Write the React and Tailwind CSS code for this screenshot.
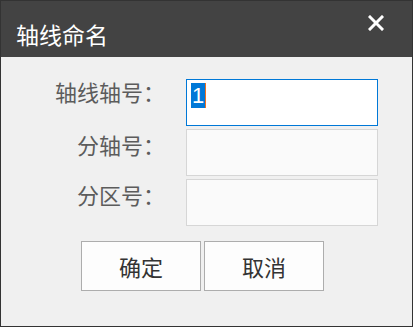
import React from "react";

const cjk = { fontFamily: '"Noto Sans CJK SC", "Noto Sans", sans-serif' };

const App = () => {
    return (
        <div className="w-[413px] h-[327px] bg-[#f0f0f0] border border-[#333333] flex flex-col" style={cjk}>
            {/* Title bar */}
            <div className="h-[56px] bg-[#434343] flex items-center justify-between pl-[15px] pr-[28px] shrink-0">
                <span className="text-white text-[23px] leading-none mt-[10px]">轴线命名</span>
                <svg width="16" height="16" viewBox="0 0 16 16" className="-mt-[13px]">
                    <path d="M2 2 L14 14 M14 2 L2 14" stroke="#ffffff" strokeWidth="3" strokeLinecap="square" />
                </svg>
            </div>

            {/* Form */}
            <div className="pt-[22px] flex flex-col gap-[3px]">
                <div className="flex">
                    <div className="w-[164px] text-right text-[22px] leading-none text-[#5c5c5c] pt-[1px]">轴线轴号：</div>
                    <div className="ml-[21px] w-[192px] h-[47px] bg-white border border-[#0078d7] px-[4px] pt-[3px]">
                        <span className="inline-flex items-center h-[25px] text-[22px] leading-none" style={{ fontFamily: '"Liberation Sans", sans-serif' }}>
                            <span className="bg-[#0078d7] text-white px-[1px] h-[25px] flex items-center">1</span>
                            <span className="w-[1px] h-[25px] bg-[#f07020]" />
                        </span>
                    </div>
                </div>
                <div className="flex">
                    <div className="w-[164px] text-right text-[22px] leading-none text-[#5c5c5c] pt-[4px]">分轴号：</div>
                    <div className="ml-[21px] w-[192px] h-[47px] bg-[#fafafa] border border-[#d6d6d6]" />
                </div>
                <div className="flex">
                    <div className="w-[164px] text-right text-[22px] leading-none text-[#5c5c5c] pt-[4px]">分区号：</div>
                    <div className="ml-[21px] w-[192px] h-[47px] bg-[#fafafa] border border-[#d6d6d6]" />
                </div>
            </div>

            {/* Buttons */}
            <div className="flex gap-[3px] pl-[80px] mt-[15px]">
                <button className="w-[120px] h-[50px] bg-[#fdfdfd] border border-[#adadad] text-[22px] text-[#333333]">确定</button>
                <button className="w-[120px] h-[50px] bg-[#fdfdfd] border border-[#adadad] text-[22px] text-[#333333]">取消</button>
            </div>
        </div>
    );
};

export default App;
